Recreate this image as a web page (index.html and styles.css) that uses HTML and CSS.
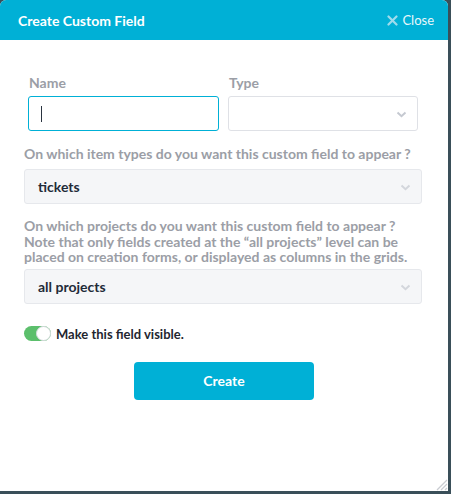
FILE: index.html
```html
<!DOCTYPE html>
<html>
<head>
<meta charset="utf-8">
<link rel="stylesheet" href="styles.css">
</head>
<body>
<div class="dialog">
  <div class="header">
    <span class="title">Create Custom Field</span>
    <span class="close"><svg width="11" height="11" viewBox="0 0 11 11"><path d="M1.5 1.5 L9.5 9.5 M9.5 1.5 L1.5 9.5" stroke="#9fdcec" stroke-width="2.2" stroke-linecap="round"/></svg>Close</span>
  </div>
  <div class="body">
    <div class="row2">
      <div class="col">
        <label class="lbl">Name</label>
        <div class="input focus"><span class="caret"></span></div>
      </div>
      <div class="col">
        <label class="lbl">Type</label>
        <div class="input select"><svg class="chev" width="11" height="7" viewBox="0 0 11 7"><path d="M1.5 1.5 L5.5 5.2 L9.5 1.5" fill="none" stroke="#c5c9d1" stroke-width="2"/></svg></div>
      </div>
    </div>
    <div class="field">
      <label class="lbl">On which item types do you want this custom field to appear ?</label>
      <div class="input select grey"><span class="val">tickets</span><svg class="chev" width="11" height="7" viewBox="0 0 11 7"><path d="M1.5 1.5 L5.5 5.2 L9.5 1.5" fill="none" stroke="#d3d6dc" stroke-width="2"/></svg></div>
    </div>
    <div class="field">
      <label class="lbl multi">On which projects do you want this custom field to appear ?<br>Note that only fields created at the “all projects” level can be placed on creation forms, or displayed as columns in the grids.</label>
      <div class="input select grey"><span class="val">all projects</span><svg class="chev" width="11" height="7" viewBox="0 0 11 7"><path d="M1.5 1.5 L5.5 5.2 L9.5 1.5" fill="none" stroke="#d3d6dc" stroke-width="2"/></svg></div>
    </div>
    <div class="toggle-row">
      <span class="toggle"><span class="knob"></span></span>
      <span class="toggle-text">Make this field visible.</span>
    </div>
    <div class="actions">
      <button class="btn">Create</button>
    </div>
  </div>
  <svg class="grip" width="14" height="14" viewBox="0 0 14 14"><path d="M13 3 L3 13 M13 7 L7 13 M13 11 L11 13" stroke="#c9ccd1" stroke-width="1.3"/></svg>
</div>
</body>
</html>
```

FILE: styles.css
```css
* { box-sizing: border-box; }
html, body { margin: 0; padding: 0; }
body {
  width: 451px;
  height: 494px;
  background: #3a4f59;
  font-family: Lato, "Open Sans", sans-serif;
  overflow: hidden;
}
.dialog {
  position: relative;
  width: 448px;
  height: 491px;
  background: #fff;
  border-radius: 6px 6px 0 0;
  overflow: hidden;
}
.header {
  height: 40px;
  background: #00b0d6;
  display: flex;
  align-items: center;
  justify-content: space-between;
  padding: 0 14px 0 18px;
  color: #fff;
}
.title {
  font-weight: 700;
  font-size: 14px;
}
.close {
  display: flex;
  align-items: center;
  gap: 4px;
  font-size: 13px;
  color: #e8f7fb;
}
.body {
  padding: 34px 26px 0 24px;
}
.row2 {
  display: grid;
  grid-template-columns: 191px 190px;
  column-gap: 9px;
  padding-left: 4px;
}
.col { display: flex; flex-direction: column; }
.lbl {
  display: block;
  font-weight: 700;
  font-size: 14px;
  color: #9b9ea6;
  line-height: 17px;
  margin-bottom: 7px;
}
.row2 .lbl { margin-left: 1px; margin-bottom: 5px; }
.input {
  position: relative;
  height: 35px;
  border: 1px solid #dfe1e6;
  border-radius: 3px;
  background: #fff;
  display: flex;
  align-items: center;
}
.input.focus {
  border-color: #00b0d6;
}
.caret {
  display: block;
  width: 1px;
  height: 16px;
  background: #2a3440;
  margin-left: 12px;
}
.chev {
  position: absolute;
  right: 10px;
  top: 14px;
}
.field { margin-top: 14px; }
.field .lbl.multi { line-height: 15.5px; margin-bottom: 4px; }
.input.grey {
  background: #f5f6f8;
  border-color: #e6e8ec;
}
.val {
  font-size: 14px;
  font-weight: 700;
  color: #1f2b38;
  margin-left: 13px;
}
.toggle-row {
  display: flex;
  align-items: center;
  margin-top: 22px;
  gap: 5px;
}
.toggle {
  position: relative;
  width: 27px;
  height: 15px;
  border-radius: 8px;
  background: #5cbf6c;
}
.knob {
  position: absolute;
  right: 0;
  top: 0;
  width: 15px;
  height: 15px;
  border-radius: 50%;
  background: #fff;
  border: 1px solid #d8dbe0;
}
.toggle-text {
  font-size: 13px;
  font-weight: 700;
  color: #1f2630;
}
.actions {
  display: flex;
  padding-left: 110px;
  margin-top: 20px;
}
.btn {
  width: 180px;
  height: 38px;
  border: none;
  border-radius: 4px;
  background: #00b0d6;
  color: #fff;
  font-family: Lato, sans-serif;
  font-weight: 700;
  font-size: 14px;
}
.grip {
  position: absolute;
  right: 0;
  bottom: 0;
}
```
